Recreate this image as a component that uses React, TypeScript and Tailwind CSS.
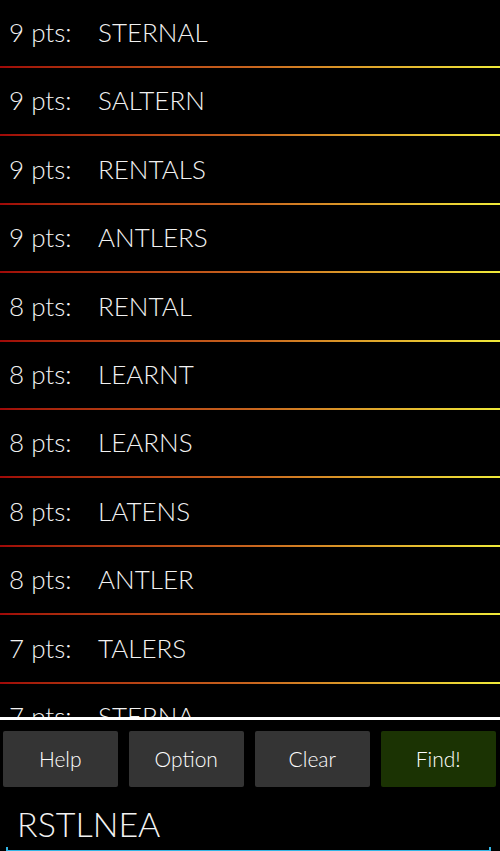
const words = [
  { pts: 9, word: "STERNAL" },
  { pts: 9, word: "SALTERN" },
  { pts: 9, word: "RENTALS" },
  { pts: 9, word: "ANTLERS" },
  { pts: 8, word: "RENTAL" },
  { pts: 8, word: "LEARNT" },
  { pts: 8, word: "LEARNS" },
  { pts: 8, word: "LATENS" },
  { pts: 8, word: "ANTLER" },
  { pts: 7, word: "TALERS" },
  { pts: 7, word: "STERNA" },
];

const buttons = ["Help", "Option", "Clear", "Find!"];

const App = () => {
  return (
    <div className="w-[500px] h-[851px] bg-black text-[#f2f2f2] overflow-hidden flex flex-col font-['Lato',sans-serif]">
      {/* result list */}
      <div className="h-[717px] overflow-hidden shrink-0">
        {words.map((w, i) => (
          <div key={i} className="h-[68.4px] flex flex-col">
            <div className="h-[66px] flex items-center pl-[9px] pb-[1px] text-[26px] font-light">
              <span className="w-[89px]">{w.pts} pts:</span>
              <span>{w.word}</span>
            </div>
            <div className="h-[2px] bg-gradient-to-r from-[#a00808] via-[#c8641e] to-[#f0ea3a]" />
          </div>
        ))}
      </div>
      <div className="h-[3px] bg-white shrink-0" />

      {/* buttons */}
      <div className="flex gap-[11.5px] pl-[3px] pt-[11px]">
        {buttons.map((b) => (
          <button
            key={b}
            className={`w-[114.5px] h-[56px] rounded-[2px] text-[21px] font-light text-white ${
              b === "Find!" ? "bg-[#1b3303]" : "bg-[#343434]"
            }`}
          >
            {b}
          </button>
        ))}
      </div>

      {/* input */}
      <div className="relative mt-[17px] ml-[6px] mr-[9px] h-[47px] flex items-start">
        <span className="pl-[11px] text-[34px] font-light leading-[40px]">RSTLNEA</span>
        <div className="absolute left-0 right-0 bottom-[-1px] h-[2px] bg-[#33b5e5]" />
        <div className="absolute left-0 bottom-[-1px] w-[2px] h-[5px] bg-[#33b5e5]" />
        <div className="absolute right-0 bottom-[-1px] w-[2px] h-[5px] bg-[#33b5e5]" />
      </div>
    </div>
  );
};

export default App;
